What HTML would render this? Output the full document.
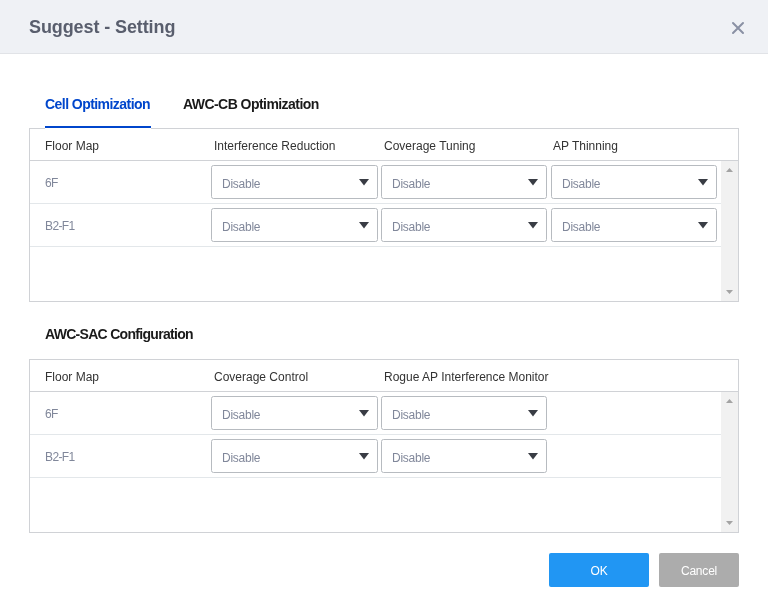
<!DOCTYPE html>
<html>
<head>
<meta charset="utf-8">
<style>
*{box-sizing:border-box;margin:0;padding:0}
html,body{width:768px;height:606px;overflow:hidden;background:#fff}
body{position:relative;-webkit-font-smoothing:antialiased;font-family:"Liberation Sans",sans-serif;color:#333}
.abs{position:absolute;white-space:nowrap}
.hdr{position:absolute;left:0;top:0;width:768px;height:54px;background:#eff1f5;border-bottom:1px solid #e1e3e7}
.title{left:29px;top:16px;font-size:18px;font-weight:bold;color:#595e6d;line-height:22px;letter-spacing:-0.1px}
.close{position:absolute;left:731px;top:21px;width:14px;height:14px}
.tab{top:96px;font-size:14px;font-weight:bold;line-height:16px;letter-spacing:-0.55px}
.tab1{left:45px;color:#0046cc}
.tab2{left:183px;color:#1a1a1a}
.uline{position:absolute;left:45px;top:126px;width:106px;height:3px;background:#fff}
.uline i{position:absolute;left:0;top:0;width:106px;height:2px;background:#0046cc}
.tbl{position:absolute;left:29px;width:710px;height:174px;border:1px solid #d0d2d6}
.th{position:absolute;left:0;top:0;width:708px;height:32px;border-bottom:1px solid #d0d2d6}
.th span{position:absolute;top:10px;font-size:12px;line-height:14px;color:#333}
.sb{position:absolute;left:691px;top:32px;width:17px;height:140px;background:#f1f1f1}
.row{position:absolute;left:0;width:691px;height:43px;border-bottom:1px solid #e3e7ea}
.row .fm{position:absolute;left:15px;top:15px;font-size:12px;line-height:14px;color:#80879a;letter-spacing:-0.6px}
.sel{position:absolute;top:4px;width:167px;height:34px;border:1px solid #b7bbc0;border-radius:2.5px;background:#fff}
.sel span{position:absolute;left:10px;top:11px;font-size:12px;line-height:14px;color:#80879a;letter-spacing:-0.25px}
.sel svg{position:absolute;right:8px;top:13px}
.sec{left:45px;top:326px;font-size:14px;font-weight:bold;line-height:16px;color:#1a1a1a;letter-spacing:-0.7px}
.btn{position:absolute;top:553px;height:34px;border-radius:2px;color:#fff;font-size:12px;line-height:34px;padding-top:1px;text-align:center;letter-spacing:-0.2px}
.ok{left:549px;width:100px;background:#2196f3}
.cancel{left:659px;width:80px;background:#acacac}
</style>
</head>
<body>
<div id="root" style="position:absolute;left:0;top:0;width:768px;height:606px;will-change:transform">
<div class="hdr"></div>
<div class="abs title">Suggest - Setting</div>
<svg class="close" viewBox="0 0 14 14"><path d="M2 2L12 12M12 2L2 12" stroke="#8a91a4" stroke-width="2" stroke-linecap="round"/></svg>

<div class="abs tab tab1">Cell Optimization</div>
<div class="abs tab tab2">AWC-CB Optimization</div>

<div class="tbl" style="top:128px">
  <div class="th">
    <span style="left:15px">Floor Map</span>
    <span style="left:184px">Interference Reduction</span>
    <span style="left:354px">Coverage Tuning</span>
    <span style="left:523px">AP Thinning</span>
  </div>
  <div class="row" style="top:32px">
    <span class="fm">6F</span>
    <div class="sel" style="left:181px"><span>Disable</span><svg width="10" height="7"><polygon points="0,0 10,0 5,6.5" fill="#393c44"/></svg></div>
    <div class="sel" style="left:351px;width:166px"><span>Disable</span><svg width="10" height="7"><polygon points="0,0 10,0 5,6.5" fill="#393c44"/></svg></div>
    <div class="sel" style="left:521px;width:166px"><span>Disable</span><svg width="10" height="7"><polygon points="0,0 10,0 5,6.5" fill="#393c44"/></svg></div>
  </div>
  <div class="row" style="top:75px">
    <span class="fm">B2-F1</span>
    <div class="sel" style="left:181px"><span>Disable</span><svg width="10" height="7"><polygon points="0,0 10,0 5,6.5" fill="#393c44"/></svg></div>
    <div class="sel" style="left:351px;width:166px"><span>Disable</span><svg width="10" height="7"><polygon points="0,0 10,0 5,6.5" fill="#393c44"/></svg></div>
    <div class="sel" style="left:521px;width:166px"><span>Disable</span><svg width="10" height="7"><polygon points="0,0 10,0 5,6.5" fill="#393c44"/></svg></div>
  </div>
  <div class="sb"><svg width="17" height="140" viewBox="0 0 17 140"><polygon points="5,11 12,11 8.5,7" fill="#a3a3a3"/><polygon points="5,129 12,129 8.5,133" fill="#a3a3a3"/></svg></div>
</div>
<div class="uline"><i></i></div>

<div class="abs sec">AWC-SAC Configuration</div>

<div class="tbl" style="top:359px">
  <div class="th">
    <span style="left:15px">Floor Map</span>
    <span style="left:184px">Coverage Control</span>
    <span style="left:354px">Rogue AP Interference Monitor</span>
  </div>
  <div class="row" style="top:32px">
    <span class="fm">6F</span>
    <div class="sel" style="left:181px"><span>Disable</span><svg width="10" height="7"><polygon points="0,0 10,0 5,6.5" fill="#393c44"/></svg></div>
    <div class="sel" style="left:351px;width:166px"><span>Disable</span><svg width="10" height="7"><polygon points="0,0 10,0 5,6.5" fill="#393c44"/></svg></div>
  </div>
  <div class="row" style="top:75px">
    <span class="fm">B2-F1</span>
    <div class="sel" style="left:181px"><span>Disable</span><svg width="10" height="7"><polygon points="0,0 10,0 5,6.5" fill="#393c44"/></svg></div>
    <div class="sel" style="left:351px;width:166px"><span>Disable</span><svg width="10" height="7"><polygon points="0,0 10,0 5,6.5" fill="#393c44"/></svg></div>
  </div>
  <div class="sb"><svg width="17" height="140" viewBox="0 0 17 140"><polygon points="5,11 12,11 8.5,7" fill="#a3a3a3"/><polygon points="5,129 12,129 8.5,133" fill="#a3a3a3"/></svg></div>
</div>

<div class="btn ok">OK</div>
<div class="btn cancel">Cancel</div>
</div>
</body>
</html>
